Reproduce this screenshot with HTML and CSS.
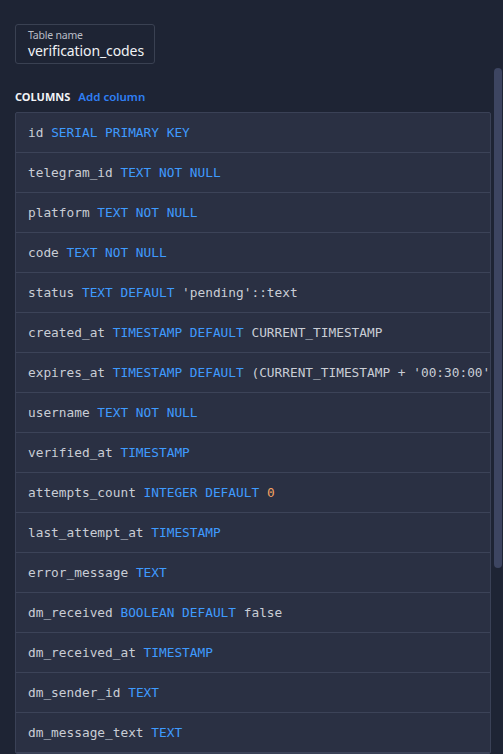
FILE: index.html
```html
<!DOCTYPE html>
<html>
<head>
<meta charset="utf-8">
<link rel="stylesheet" href="styles.css">
</head>
<body>
<div class="page">
  <div class="name-box">
    <div class="name-label">Table name</div>
    <div class="name-value">verification_codes</div>
  </div>
  <div class="cols-head">
    <span class="cols-title">COLUMNS</span>
    <span class="add-col">Add column</span>
  </div>
  <div class="col-list">
    <div class="col-row">id <span class="kw">SERIAL PRIMARY KEY</span></div>
    <div class="col-row">telegram_id <span class="kw">TEXT NOT NULL</span></div>
    <div class="col-row">platform <span class="kw">TEXT NOT NULL</span></div>
    <div class="col-row">code <span class="kw">TEXT NOT NULL</span></div>
    <div class="col-row">status <span class="kw">TEXT DEFAULT</span> 'pending'::text</div>
    <div class="col-row">created_at <span class="kw">TIMESTAMP DEFAULT</span> CURRENT_TIMESTAMP</div>
    <div class="col-row">expires_at <span class="kw">TIMESTAMP DEFAULT</span> (CURRENT_TIMESTAMP + '00:30:00'</div>
    <div class="col-row">username <span class="kw">TEXT NOT NULL</span></div>
    <div class="col-row">verified_at <span class="kw">TIMESTAMP</span></div>
    <div class="col-row">attempts_count <span class="kw">INTEGER DEFAULT</span> <span class="num">0</span></div>
    <div class="col-row">last_attempt_at <span class="kw">TIMESTAMP</span></div>
    <div class="col-row">error_message <span class="kw">TEXT</span></div>
    <div class="col-row">dm_received <span class="kw">BOOLEAN DEFAULT</span> false</div>
    <div class="col-row">dm_received_at <span class="kw">TIMESTAMP</span></div>
    <div class="col-row">dm_sender_id <span class="kw">TEXT</span></div>
    <div class="col-row">dm_message_text <span class="kw">TEXT</span></div>
  </div>
</div>
<div class="scroll-thumb"></div>
</body>
</html>
```
FILE: styles.css
```css
html, body {
  margin: 0;
  padding: 0;
  height: 754px;
  overflow: hidden;
  background: #1e2434;
}
body {
  position: relative;
  font-family: "Noto Sans", "Liberation Sans", sans-serif;
}
.page {
  padding: 24px 12px 0 15px;
}
.name-box {
  display: flex;
  flex-direction: column;
  box-sizing: border-box;
  width: 140px;
  height: 40px;
  border: 1px solid #3a4152;
  border-radius: 3px;
  padding: 4px 0 0 12px;
}
.name-label {
  font-size: 10.5px;
  line-height: 13px;
  color: #b9bdc6;
  letter-spacing: -0.2px;
}
.name-value {
  font-size: 14px;
  line-height: 18px;
  color: #f0f2f5;
  letter-spacing: -0.1px;
}
.cols-head {
  margin-top: 26px;
  display: flex;
  align-items: baseline;
  gap: 8px;
  height: 13px;
  line-height: 13px;
}
.cols-title {
  font-size: 11px;
  font-weight: 700;
  color: #f2f4f7;
}
.add-col {
  font-size: 11.5px;
  font-weight: 600;
  color: #2f7ff5;
}
.col-list {
  margin-top: 9px;
  width: 476px;
  box-sizing: border-box;
  background: #2a3043;
  border: 1px solid #3a4156;
  border-radius: 2px;
  overflow: hidden;
}
.col-row {
  height: 39px;
  line-height: 39px;
  padding-left: 12px;
  border-bottom: 1px solid #3c4358;
  font-family: "DejaVu Sans Mono", "Liberation Mono", monospace;
  font-size: 12.8px;
  color: #c9cdd5;
  white-space: nowrap;
  overflow: hidden;
}
.kw {
  color: #3f9bff;
}
.num {
  color: #f3a261;
}
.scroll-thumb {
  position: absolute;
  top: 68px;
  right: 1px;
  width: 8px;
  height: 500px;
  border-radius: 4px;
  background: #3d4561;
}
```
